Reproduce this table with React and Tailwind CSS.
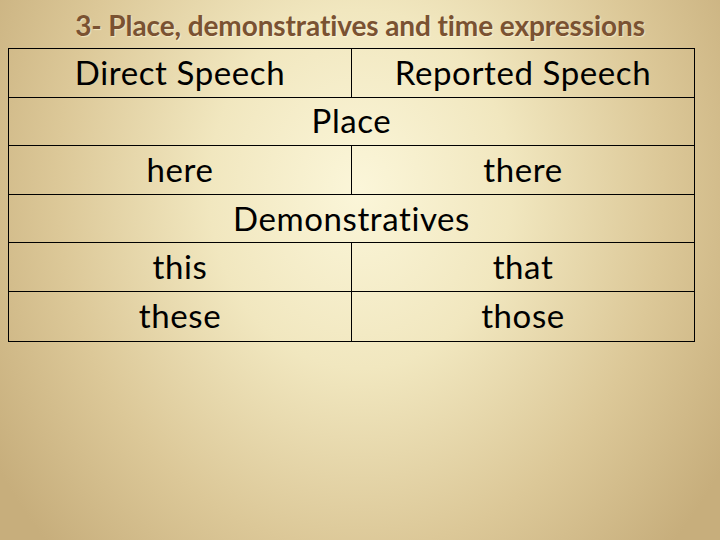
export default function App() {
  const rows = [
    { type: "split", l: "Direct Speech", r: "Reported Speech" },
    { type: "full", t: "Place" },
    { type: "split", l: "here", r: "there" },
    { type: "full", t: "Demonstratives" },
    { type: "split", l: "this", r: "that" },
    { type: "split", l: "these", r: "those" },
  ];
  return (
    <div
      className="w-[720px] h-[540px] overflow-hidden bg-[radial-gradient(ellipse_60%_95%_at_50%_35%,#fbf6d9_0%,#f1e7bf_35%,#dcc898_70%,#c7ae7c_100%)]"
      style={{ fontFamily: "Lato, 'Open Sans', sans-serif" }}
    >
      <div className="h-[48px] flex items-start justify-center pt-[9px]">
        <h1 className="text-[28px] leading-[32px] font-bold text-[#7a5232] tracking-[-0.1px] [text-shadow:1px_1px_1px_rgba(255,250,220,0.6)]">
          3- Place, demonstratives and time expressions
        </h1>
      </div>
      <div className="ml-[8px] w-[687px] border-[1.5px] border-black text-black text-[33px] tracking-[0.6px] leading-none">
        {rows.map((row, i) => (
          <div
            key={i}
            className={`h-[48.6px] flex ${i < rows.length - 1 ? "border-b-[1.5px] border-black" : ""}`}
          >
            {row.type === "split" ? (
              <>
                <div className="w-[343px] border-r-[1.5px] border-black flex items-center justify-center pb-[1px]">
                  {row.l}
                </div>
                <div className="flex-1 flex items-center justify-center pb-[1px]">{row.r}</div>
              </>
            ) : (
              <div className="flex-1 flex items-center justify-center pb-[1px]">{row.t}</div>
            )}
          </div>
        ))}
      </div>
    </div>
  );
}
